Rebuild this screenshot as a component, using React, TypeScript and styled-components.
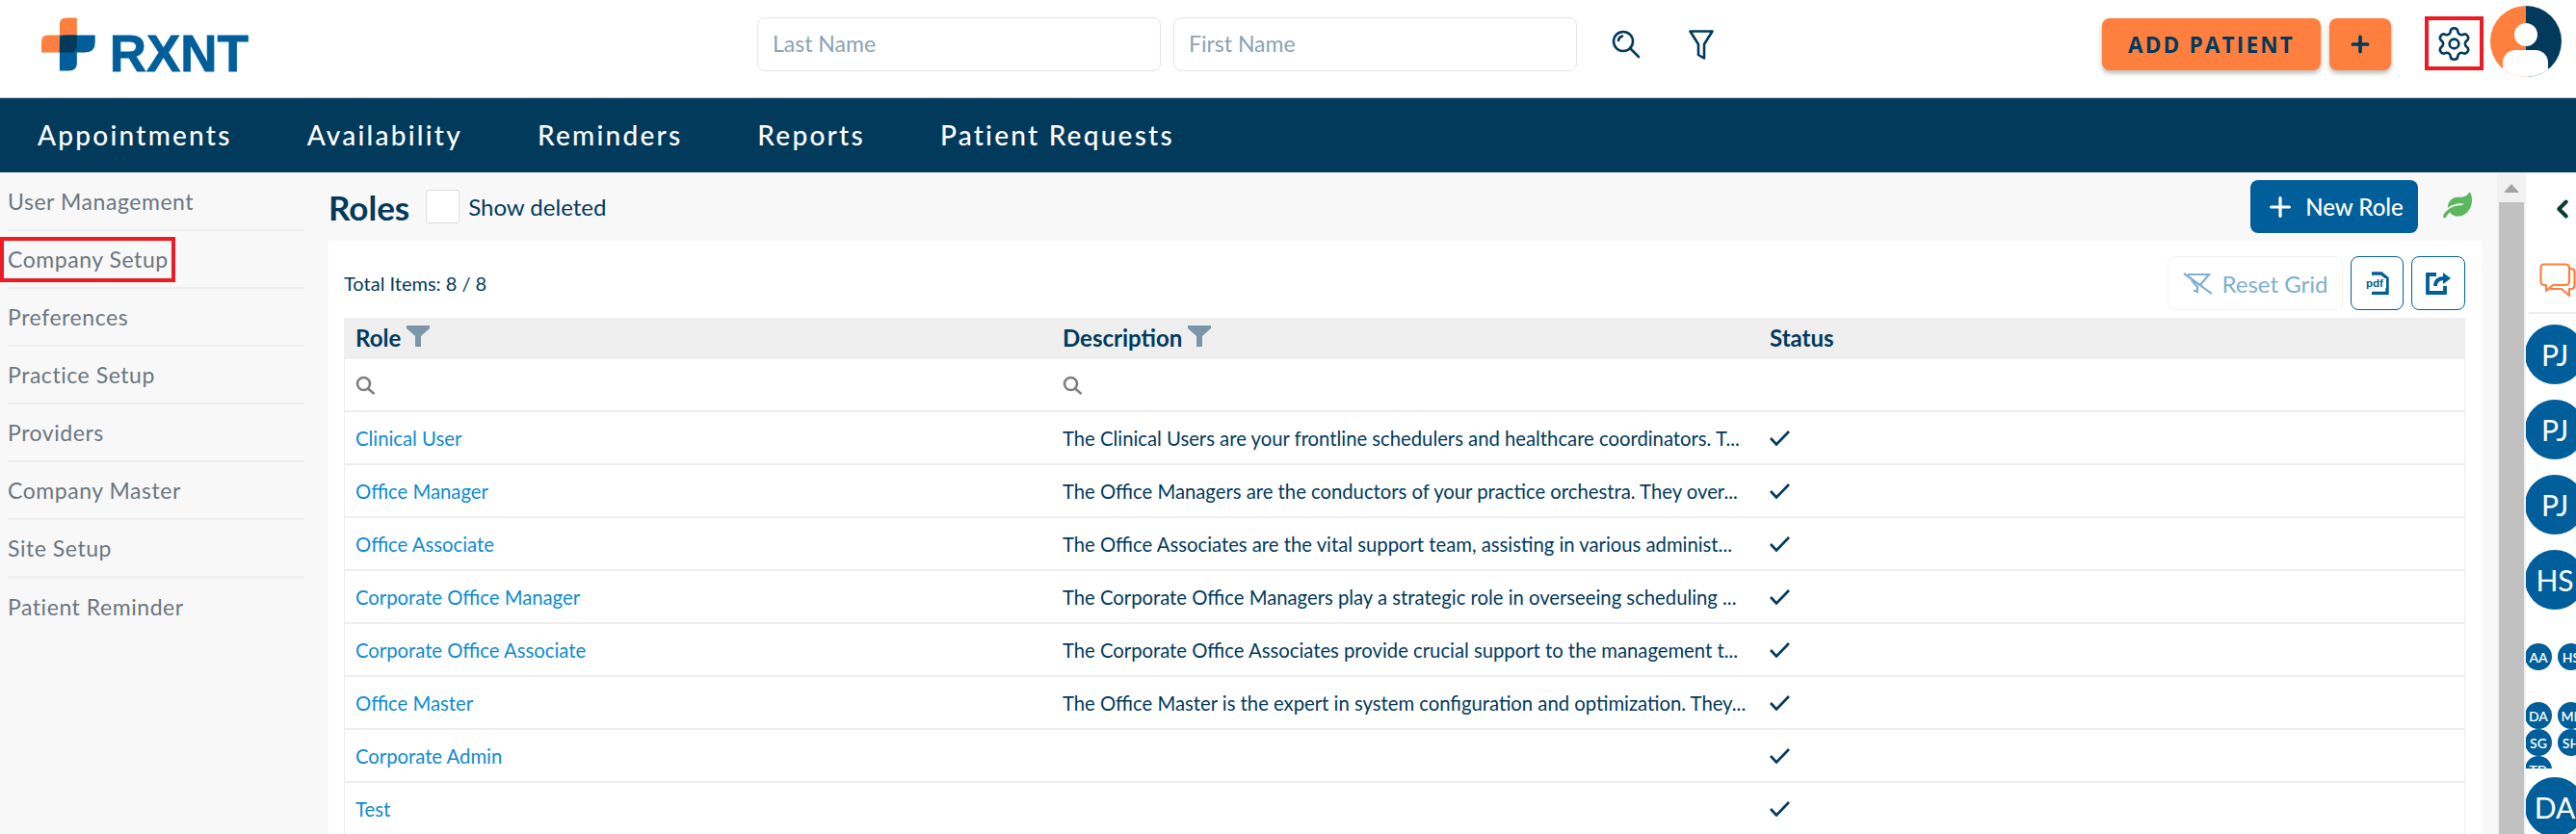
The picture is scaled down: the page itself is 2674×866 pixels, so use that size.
import React from "react";
import styled, { createGlobalStyle } from "styled-components";
import { Settings, Plus, ChevronLeft } from "lucide-react";
import { FaLeaf } from "react-icons/fa";

const navy = "#023a5c";
const blue = "#005f9a";
const orange = "#ff7f3f";

const Global = createGlobalStyle`
  html, body { margin: 0; padding: 0; background: #fff; overflow: hidden; }
  body { font-family: Lato, "Open Sans", sans-serif; color: ${navy}; }
  * { box-sizing: border-box; }
`;

const Page = styled.div`
  width: 2674px;
  height: 866px;
  display: flex;
  flex-direction: column;
  overflow: hidden;
`;

const Header = styled.header`
  height: 102px;
  flex: none;
  display: flex;
  align-items: center;
  border-bottom: 1px solid #b9c4cb;
  background: #fff;
`;

const Logo = styled.div`
  margin-left: 43px;
  width: 215px;
  display: flex;
  align-items: flex-end;
  gap: 15px;
  margin-top: -9px;
`;

const LogoWord = styled.span`
  font-family: "Liberation Sans", sans-serif;
  font-weight: 700;
  font-size: 53px;
  line-height: 39px;
  height: 39px;
  color: ${blue};
  -webkit-text-stroke: 0.8px ${blue};
`;

const SearchFields = styled.div`
  margin-left: 528px;
  display: flex;
  gap: 13px;
  margin-top: -10px;
`;

const NameInput = styled.input`
  width: 419px;
  height: 56px;
  border: 1px solid #e2e5e7;
  border-radius: 8px;
  padding: 0 15px 2px;
  font: 400 23px Lato, sans-serif;
  background: #fff;
  &::placeholder { color: #8aa3b3; opacity: 1; }
`;

const HeaderIcon = styled.button`
  border: 0;
  background: none;
  padding: 0;
  display: flex;
  margin-top: -9px;
  margin-left: ${(p: { $ml: number }) => p.$ml}px;
`;

const AddButton = styled.button`
  margin-left: ${(p: { $ml: number; $w: number }) => p.$ml}px;
  width: ${(p) => p.$w}px;
  height: 54px;
  margin-top: -9px;
  border: 0;
  border-radius: 8px;
  background: ${orange};
  color: ${navy};
  box-shadow: 0 3px 5px rgba(0, 0, 0, 0.28);
  font: 700 22.5px "Open Sans", sans-serif;
  letter-spacing: 2.2px;
  display: flex;
  align-items: center;
  justify-content: center;
  padding: 0;
`;

const GearBox = styled.div`
  margin-left: 35px;
  margin-top: -11px;
  width: 61px;
  height: 56px;
  border: 4px solid #ed1c24;
  display: flex;
  align-items: center;
  justify-content: center;
  color: ${navy};
`;

const UserPic = styled.svg`
  margin-left: 7px;
  margin-top: -15px;
  width: 74px;
  height: 74px;
  flex: none;
`;

const Nav = styled.nav`
  height: 77px;
  flex: none;
  background: ${navy};
  display: flex;
  align-items: center;
  gap: 78px;
  padding: 0 0 2px 39px;
`;

const NavLink = styled.a`
  color: #fff;
  font-size: 28px;
  font-weight: 500;
  letter-spacing: 2.25px;
  line-height: 1;
`;

const Body = styled.div`
  flex: 1;
  min-height: 0;
  display: flex;
  background: #f8f8f8;
`;

const Sidebar = styled.aside`
  width: 340px;
  flex: none;
  padding: 1px 24px 0 8px;
`;

const SideItem = styled.div`
  position: relative;
  height: 60px;
  display: flex;
  align-items: center;
  padding-bottom: 1px;
  font-size: 23px;
  letter-spacing: 0.55px;
  color: #6b7680;
  border-bottom: ${(p: { $last?: boolean }) => (p.$last ? "0" : "2px solid #eeeeee")};
`;

const Highlight = styled.span`
  position: absolute;
  left: -8px;
  top: 6px;
  width: 182px;
  height: 47px;
  border: 4px solid #ed1c24;
`;

const Main = styled.main`
  width: 2252px;
  flex: none;
  padding: 8px 16px 0 1px;
  display: flex;
  flex-direction: column;
`;

const TitleRow = styled.div`
  height: 55px;
  flex: none;
  display: flex;
  align-items: center;
  padding-right: 10px;
  margin-bottom: 8px;
`;

const Title = styled.h1`
  margin: 0;
  font-size: 35px;
  font-weight: 700;
  color: ${navy};
`;

const CheckBox = styled.span`
  width: 35px;
  height: 35px;
  margin-left: 17px;
  background: #fff;
  border: 1px solid #dedede;
  border-radius: 3px;
`;

const CheckLabel = styled.span`
  margin-left: 9px;
  font-size: 24px;
  color: ${navy};
`;

const NewRole = styled.button`
  margin-left: auto;
  width: 174px;
  height: 55px;
  border: 0;
  border-radius: 8px;
  background: ${blue};
  color: #fff;
  font: 500 24px Lato, sans-serif;
  display: flex;
  align-items: center;
  justify-content: center;
  gap: 10px;
  padding: 0;
`;

const LeafWrap = styled.span`
  margin-left: 26px;
  display: flex;
  color: #5cb85c;
  margin-top: -3px;
`;

const Card = styled.section`
  flex: 1;
  min-height: 0;
  background: #fff;
  padding: 16px 17px 0 16px;
  overflow: hidden;
`;

const Toolbar = styled.div`
  height: 56px;
  display: flex;
  align-items: center;
  gap: 8px;
  margin-bottom: 8px;
`;

const Total = styled.span`
  font-size: 20px;
  margin-right: auto;
  color: ${navy};
`;

const ResetButton = styled.button`
  width: 182px;
  height: 56px;
  border: 1px solid #eef2f4;
  border-radius: 8px;
  background: #fff;
  color: #7fb0d0;
  font: 400 24px Lato, sans-serif;
  display: flex;
  align-items: center;
  justify-content: center;
  gap: 11px;
  padding: 0;
`;

const IconButton = styled.button`
  width: ${(p: { $w: number }) => p.$w}px;
  height: 56px;
  border: 1px solid ${blue};
  border-radius: 8px;
  background: #fff;
  display: flex;
  align-items: center;
  justify-content: center;
  padding: 0;
`;

const Row = styled.div`
  display: grid;
  grid-template-columns: 734px 734px 1fr;
  height: ${(p: { $h: number; $head?: boolean }) => p.$h}px;
  background: ${(p) => (p.$head ? "#efefef" : "#fff")};
  border-bottom: ${(p) => (p.$head ? "0" : "2px solid #eeeeee")};
  border-left: ${(p) => (p.$head ? "0" : "1px solid #eeeeee")};
  border-right: ${(p) => (p.$head ? "0" : "1px solid #eeeeee")};
`;

const Cell = styled.div`
  display: flex;
  align-items: center;
  gap: 6px;
  padding: 0 6px 0 11px;
  min-width: 0;
  overflow: hidden;
  white-space: nowrap;
  font-size: 20.25px;
  color: ${navy};
`;

const HeadCell = styled(Cell)`
  padding: 0 6px 3px 12px;
  font-size: 24px;
  font-weight: 700;
`;

const FunnelIcon = styled.svg`
  margin-top: -3px;
`;

const RoleLink = styled.a`
  color: #0f8bd0;
`;

const Track = styled.div`
  width: 30px;
  flex: none;
  margin-top: 1px;
  background: #f1f1f1;
  display: flex;
  flex-direction: column;
  align-items: center;
  padding-top: 11px;
`;

const Arrow = styled.span`
  width: 0;
  height: 0;
  border-left: 8px solid transparent;
  border-right: 8px solid transparent;
  border-bottom: 9px solid #a3a3a3;
  margin-bottom: 10px;
`;

const Thumb = styled.span`
  width: 26px;
  flex: 1;
  background: #c1c1c1;
`;

const Panel = styled.aside`
  width: 52px;
  flex: none;
  margin-top: 3px;
  background: #fff;
  overflow: hidden;
  display: flex;
  flex-direction: column;
`;

const Collapse = styled.div`
  height: 66px;
  flex: none;
  padding-left: 23px;
  padding-top: 20px;
  color: #0b3d33;
`;

const ChatBox = styled.div`
  height: 78px;
  flex: none;
  padding: 25px 0 0 11px;
  margin-left: 3px;
  border-bottom: 2px solid #eeeeee;
`;

const Avatar = styled.div`
  flex: none;
  width: ${(p: { $size: number; $mt?: number }) => p.$size}px;
  height: ${(p) => p.$size}px;
  margin-top: ${(p) => p.$mt ?? 0}px;
  border-radius: 50%;
  background: ${blue};
  color: #fff;
  display: flex;
  align-items: center;
  justify-content: center;
  font-size: ${(p) => (p.$size > 40 ? 30 : 14)}px;
  font-weight: ${(p) => (p.$size > 40 ? 400 : 600)};
  margin-left: -1px;
`;

const SmallGroup = styled.div`
  flex: none;
  width: 80px;
  height: ${(p: { $h: number; $mt: number }) => p.$h}px;
  margin-top: ${(p) => p.$mt}px;
  margin-left: -1px;
  display: grid;
  grid-template-columns: 28px 28px;
  grid-auto-rows: 28px;
  column-gap: 6px;
  overflow: hidden;
`;

const Tiny = styled(Avatar)`
  margin-left: 0;
`;

const roles = [
  ["Clinical User", "The Clinical Users are your frontline schedulers and healthcare coordinators. T..."],
  ["Office Manager", "The Office Managers are the conductors of your practice orchestra. They over..."],
  ["Office Associate", "The Office Associates are the vital support team, assisting in various administ..."],
  ["Corporate Office Manager", "The Corporate Office Managers play a strategic role in overseeing scheduling ..."],
  ["Corporate Office Associate", "The Corporate Office Associates provide crucial support to the management t..."],
  ["Office Master", "The Office Master is the expert in system configuration and optimization. They..."],
  ["Corporate Admin", ""],
  ["Test", ""],
];

const menu = ["User Management", "Company Setup", "Preferences", "Practice Setup", "Providers", "Company Master", "Site Setup", "Patient Reminder"];
const tabs = ["Appointments", "Availability", "Reminders", "Reports", "Patient Requests"];

const Funnel = () => (
  <FunnelIcon width="24" height="22" viewBox="0 0 24 22"><path d="M0 0H24V3L15 11V22H9V11L0 3Z" fill="#7a96a8" /></FunnelIcon>
);
const GreySearch = () => (
  <svg width="21" height="20" viewBox="0 0 21 20" fill="none" stroke="#808080" strokeWidth="2.6">
    <circle cx="8.5" cy="8.5" r="6.5" /><path d="M13 13.5L19.5 19" />
  </svg>
);
const Check = () => (
  <svg width="21" height="16" viewBox="0 0 21 16" fill="none" stroke={navy} strokeWidth="2.6">
    <path d="M1 8L7 14.5L20 1" />
  </svg>
);

export default function App() {
  return (
    <Page>
      <Global />
      <Header>
        <Logo>
          <svg width="59" height="58" viewBox="0 0 59 58">
            <path d="M27 0H39V38H0V26Q0 19 7 19H20V7Q20 0 27 0Z" fill={orange} />
            <path d="M20 19H59V27Q59 38 48 38H39V50Q39 58 31 58H20Z" fill={blue} />
            <path d="M27 19H39V31Q39 38 32 38H20V26Q20 19 27 19Z" fill={navy} />
          </svg>
          <LogoWord>RXNT</LogoWord>
        </Logo>
        <SearchFields>
          <NameInput placeholder="Last Name" />
          <NameInput placeholder="First Name" />
        </SearchFields>
        <HeaderIcon $ml={36}>
          <svg width="30" height="30" viewBox="0 0 30 30" fill="none" stroke={navy} strokeWidth="2.6" strokeLinecap="round">
            <circle cx="12" cy="12" r="10" /><path d="M19 19L28 28" /><path d="M7 11Q7.5 7.5 11 6.5" />
          </svg>
        </HeaderIcon>
        <HeaderIcon $ml={50}>
          <svg width="26" height="31" viewBox="0 0 26 31" fill="none" stroke={navy} strokeWidth="2.6" strokeLinejoin="round">
            <path d="M1.5 1.5H24.5L16 15V29.5L10 26V15Z" />
          </svg>
        </HeaderIcon>
        <AddButton $ml={403} $w={227}>ADD PATIENT</AddButton>
        <AddButton $ml={9} $w={64}><Plus size={26} strokeWidth={3.4} /></AddButton>
        <GearBox><Settings size={39} strokeWidth={1.6} /></GearBox>
        <UserPic viewBox="0 0 74 74">
          <defs><clipPath id="pic"><circle cx="37" cy="37" r="37" /></clipPath></defs>
          <g clipPath="url(#pic)">
            <rect x="0" y="0" width="37" height="74" fill={orange} />
            <rect x="37" y="0" width="37" height="74" fill={navy} />
            <circle cx="37" cy="30" r="12" fill="#fff" />
            <rect x="13" y="46" width="47" height="40" rx="13" fill="#fff" />
          </g>
        </UserPic>
      </Header>
      <Nav>{tabs.map((t) => <NavLink key={t}>{t}</NavLink>)}</Nav>
      <Body>
        <Sidebar>
          {menu.map((m, i) => (
            <SideItem key={m} $last={i === menu.length - 1}>
              {m}
              {i === 1 && <Highlight />}
            </SideItem>
          ))}
        </Sidebar>
        <Main>
          <TitleRow>
            <Title>Roles</Title>
            <CheckBox />
            <CheckLabel>Show deleted</CheckLabel>
            <NewRole><Plus size={32} strokeWidth={2.4} />New Role</NewRole>
            <LeafWrap><FaLeaf size={30} /></LeafWrap>
          </TitleRow>
          <Card>
            <Toolbar>
              <Total>Total Items: 8 / 8</Total>
              <ResetButton>
                <svg width="30" height="23" viewBox="0 0 30 23" fill="none" stroke="#7fb0d0" strokeWidth="2.2">
                  <path d="M5 2H27L18 13" /><path d="M9 8L15 15V20L11 18.5" /><path d="M1 1L30 22" />
                </svg>
                Reset Grid
              </ResetButton>
              <IconButton $w={55}>
                <svg width="24" height="24" viewBox="0 0 24 24">
                  <path d="M6 2H16L22 7V22.500H6" fill="none" stroke={blue} strokeWidth="3.4" />
                  <rect x="0" y="7" width="21" height="10" fill="#fff" />
                  <text x="0" y="15.500" fontFamily="Liberation Sans, sans-serif" fontSize="11.500" fontWeight="700" fill={blue}>pdf</text>
                </svg>
              </IconButton>
              <IconButton $w={56}>
                <svg width="26" height="24" viewBox="0 0 26 24" fill="none" stroke={blue} strokeWidth="3.8">
                  <path d="M11 3H2V22H20V15" />
                  <path d="M10 15Q10 7 19 7" />
                  <path d="M18 1L26 7L18 13Z" fill={blue} strokeWidth="0" />
                </svg>
              </IconButton>
            </Toolbar>
            <Row $h={43} $head>
              <HeadCell>Role <Funnel /></HeadCell>
              <HeadCell>Description <Funnel /></HeadCell>
              <HeadCell>Status</HeadCell>
            </Row>
            <Row $h={55}>
              <Cell><GreySearch /></Cell>
              <Cell><GreySearch /></Cell>
              <Cell />
            </Row>
            {roles.map(([r, d]) => (
              <Row $h={55} key={r}>
                <Cell><RoleLink>{r}</RoleLink></Cell>
                <Cell>{d}</Cell>
                <Cell><Check /></Cell>
              </Row>
            ))}
          </Card>
        </Main>
        <Track><Arrow /><Thumb /></Track>
        <Panel>
          <Collapse><ChevronLeft size={30} strokeWidth={3.2} /></Collapse>
          <ChatBox>
            <svg width="38" height="35" viewBox="0 0 38 35" fill="none" stroke={orange} strokeWidth="2.2" strokeLinejoin="round">
              <path d="M5 1.5H27Q31 1.5 31 5.5V19Q31 23 27 23H14L7 29V23H5Q1.500 23 1.500 19V5.500Q1.500 1.500 5 1.500Z" />
              <path d="M31 6H33Q36.500 6 36.500 9.500V23Q36.500 27 33 27H31V34L23 27H11" />
            </svg>
          </ChatBox>
          <Avatar $size={62} $mt={11}>PJ</Avatar>
          <Avatar $size={62} $mt={16}>PJ</Avatar>
          <Avatar $size={62} $mt={16}>PJ</Avatar>
          <Avatar $size={62} $mt={16}>HS</Avatar>
          <SmallGroup $h={28} $mt={35}>
            <Tiny $size={28}>AA</Tiny><Tiny $size={28}>HS</Tiny>
          </SmallGroup>
          <SmallGroup $h={69} $mt={33}>
            <Tiny $size={28}>DA</Tiny><Tiny $size={28}>ME</Tiny>
            <Tiny $size={28}>SG</Tiny><Tiny $size={28}>SH</Tiny>
            <Tiny $size={28}>TD</Tiny>
          </SmallGroup>
          <Avatar $size={62} $mt={9}>DA</Avatar>
        </Panel>
      </Body>
    </Page>
  );
}
